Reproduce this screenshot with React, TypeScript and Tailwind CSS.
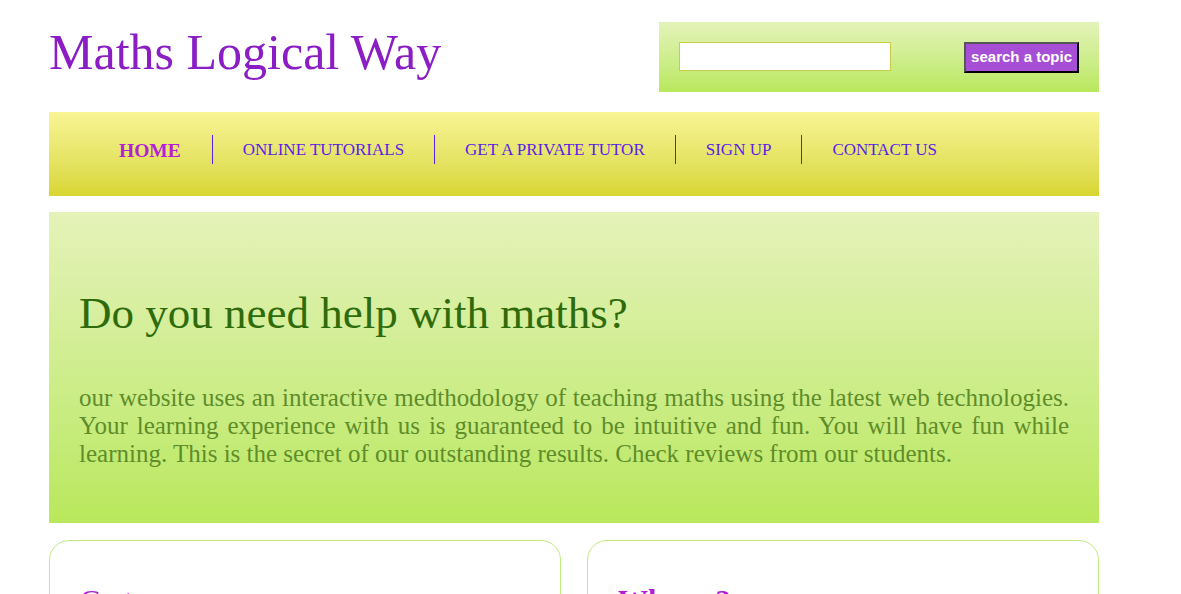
import React from "react";

const serif = { fontFamily: '"Liberation Serif", "Times New Roman", serif' };

export default function App() {
  const items = ["ONLINE TUTORIALS", "GET A PRIVATE TUTOR", "SIGN UP", "CONTACT US"];
  return (
    <div className="min-h-screen bg-white overflow-hidden" style={serif}>
      <div className="ml-[49px] w-[1050px]">
        {/* header */}
        <div className="flex justify-between items-start h-[112px]">
          <h1 className="pt-[15px] text-[50px] leading-normal text-[#8a1ec4]">Maths Logical Way</h1>
          <div className="mt-[22px] w-[440px] h-[70px] bg-gradient-to-b from-[#e4f3b9] to-[#b9e85b] flex justify-between items-start px-[20px] pt-[20px]">
            <input className="w-[212px] h-[29px] bg-white border border-[#c9cd4a] outline-none" />
            <button
              className="h-[31px] px-[5px] bg-[#a64fd6] text-white font-bold text-[15px] border-2 border-t-[#555] border-l-[#555] border-b-black border-r-black"
              style={{ fontFamily: '"Liberation Sans", Arial, sans-serif' }}
            >
              search a topic
            </button>
          </div>
        </div>

        {/* nav */}
        <div className="h-[84px] bg-gradient-to-b from-[#f8f595] to-[#d8d62f] flex items-start pl-[70px] pt-[23px]">
          <div className="h-[29px] leading-[31px] pr-[31px] text-[19.5px] font-bold text-[#b41ed4]">HOME</div>
          {items.map((t) => (
            <div key={t} className="h-[29px] leading-[29px] px-[30px] border-l border-[#5a1ee6] text-[17px] text-[#5a1ee6]">
              {t}
            </div>
          ))}
        </div>

        {/* hero */}
        <div className="mt-[16px] h-[311px] bg-gradient-to-b from-[#e5f2b9] to-[#b9e85b] px-[30px] pt-[68px]">
          <h2 className="text-[45px] leading-normal text-[#2e6b0b]">Do you need help with maths?</h2>
          <p className="mt-[36px] text-[25px] leading-[28px] text-[#5e8d2a] text-justify">
            our website uses an interactive medthodology of teaching maths using the latest web technologies. Your learning experience with us is guaranteed to be intuitive and fun. You will have fun while learning. This is the secret of our outstanding results. Check reviews from our students.
          </p>
        </div>

        {/* cards */}
        <div className="mt-[17px] grid grid-cols-2 gap-[26px]">
          <div className="h-[200px] border border-[#bfeb7f] rounded-[20px] px-[30px] pt-[36px]">
            <h3 className="text-[30px] leading-normal text-[#b01ed8]">Go to:</h3>
          </div>
          <div className="h-[200px] border border-[#bfeb7f] rounded-[20px] px-[30px] pt-[36px]">
            <h3 className="text-[30px] leading-normal font-bold text-[#b01ed8]">Why us?</h3>
          </div>
        </div>
      </div>
    </div>
  );
}
